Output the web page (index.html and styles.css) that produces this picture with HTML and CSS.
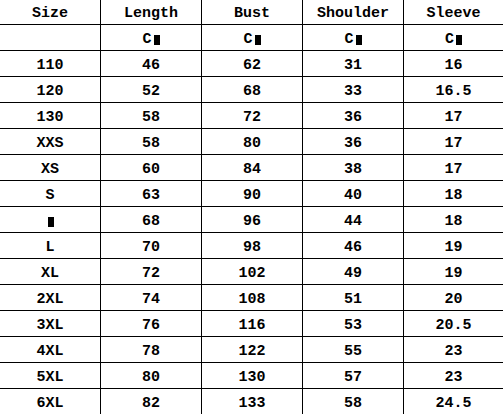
FILE: index.html
```html
<!DOCTYPE html>
<html>
<head>
<meta charset="utf-8">
<link rel="stylesheet" href="styles.css">
</head>
<body>
<div class="chart">
  <div class="c h">Size</div><div class="c h">Length</div><div class="c h">Bust</div><div class="c h">Shoulder</div><div class="c h">Sleeve</div>
  <div class="c"></div><div class="c">C<span class="m">M</span></div><div class="c">C<span class="m">M</span></div><div class="c">C<span class="m">M</span></div><div class="c">C<span class="m">M</span></div>
  <div class="c">110</div><div class="c">46</div><div class="c">62</div><div class="c">31</div><div class="c">16</div>
  <div class="c">120</div><div class="c">52</div><div class="c">68</div><div class="c">33</div><div class="c">16.5</div>
  <div class="c">130</div><div class="c">58</div><div class="c">72</div><div class="c">36</div><div class="c">17</div>
  <div class="c">XXS</div><div class="c">58</div><div class="c">80</div><div class="c">36</div><div class="c">17</div>
  <div class="c">XS</div><div class="c">60</div><div class="c">84</div><div class="c">38</div><div class="c">17</div>
  <div class="c">S</div><div class="c">63</div><div class="c">90</div><div class="c">40</div><div class="c">18</div>
  <div class="c"><span class="m">M</span></div><div class="c">68</div><div class="c">96</div><div class="c">44</div><div class="c">18</div>
  <div class="c">L</div><div class="c">70</div><div class="c">98</div><div class="c">46</div><div class="c">19</div>
  <div class="c">XL</div><div class="c">72</div><div class="c">102</div><div class="c">49</div><div class="c">19</div>
  <div class="c">2XL</div><div class="c">74</div><div class="c">108</div><div class="c">51</div><div class="c">20</div>
  <div class="c">3XL</div><div class="c">76</div><div class="c">116</div><div class="c">53</div><div class="c">20.5</div>
  <div class="c">4XL</div><div class="c">78</div><div class="c">122</div><div class="c">55</div><div class="c">23</div>
  <div class="c">5XL</div><div class="c">80</div><div class="c">130</div><div class="c">57</div><div class="c">23</div>
  <div class="c">6XL</div><div class="c">82</div><div class="c">133</div><div class="c">58</div><div class="c">24.5</div>
</div>
</body>
</html>
```
FILE: styles.css
```css
html, body {
  margin: 0;
  padding: 0;
  background: #fff;
}
.chart {
  display: grid;
  grid-template-columns: 100px 100px 100px 100px 99px;
  grid-template-rows: 24px repeat(15, 25px);
  gap: 1px;
  background: #000;
  width: 503px;
  height: 414px;
  font-family: "Liberation Mono", "DejaVu Sans Mono", monospace;
  font-weight: bold;
  font-size: 15px;
  color: #000;
}
.c {
  background: #fff;
  display: flex;
  align-items: center;
  justify-content: center;
  padding-top: 3px;
  box-sizing: border-box;
  line-height: 1;
  white-space: pre;
}
.m {
  display: inline-block;
  width: 6px;
  height: 10px;
  background: #000;
  color: #000;
  font-size: 8px;
  line-height: 10px;
  text-align: center;
  margin-left: 2px;
  margin-top: 1px;
}
```
